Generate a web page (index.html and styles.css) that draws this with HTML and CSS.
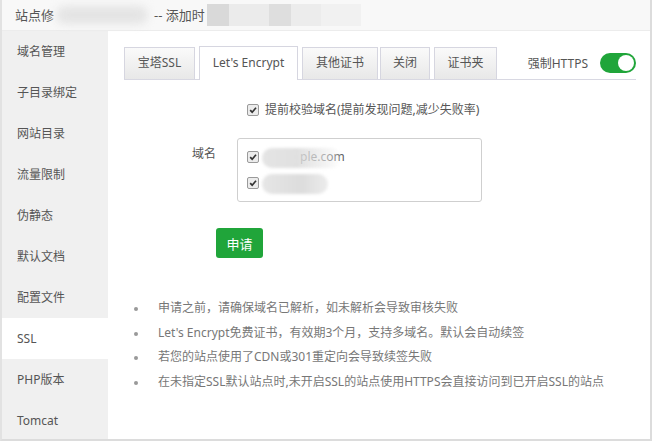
FILE: index.html
```html
<!DOCTYPE html>
<html lang="zh-CN">
<head>
<meta charset="utf-8">
<title>站点修改</title>
<link rel="stylesheet" href="styles.css">
</head>
<body>
<div class="window">
  <div class="header">
    <span class="title">站点修</span><span class="blur blur-a"></span><span class="title">-- 添加时</span><span class="mosaic"><i class="m1"></i><i class="m2"></i><i class="m3"></i><i class="m4"></i><i class="m5"></i></span>
  </div>
  <div class="main">
    <ul class="sidebar">
      <li>域名管理</li>
      <li>子目录绑定</li>
      <li>网站目录</li>
      <li>流量限制</li>
      <li>伪静态</li>
      <li>默认文档</li>
      <li>配置文件</li>
      <li class="active">SSL</li>
      <li>PHP版本</li>
      <li>Tomcat</li>
    </ul>
    <div class="content">
      <div class="tabbar">
        <div class="tab t1">宝塔SSL</div>
        <div class="tab t2 on">Let's Encrypt</div>
        <div class="tab t3">其他证书</div>
        <div class="tab t4">关闭</div>
        <div class="tab t5">证书夹</div>
        <div class="force">
          <span class="force-label">强制HTTPS</span>
          <span class="toggle"><span class="knob"></span></span>
        </div>
      </div>

      <div class="check-row">
        <span class="cb"><svg viewBox="0 0 12 12" width="12" height="12"><path d="M2.6 6.2 L5 8.6 L9.6 3.2" fill="none" stroke="#333" stroke-width="2"/></svg></span>
        <span class="check-text">提前校验域名(提前发现问题,减少失败率)</span>
      </div>

      <div class="form-row">
        <div class="label">域名</div>
        <div class="domains">
          <div class="drow">
            <span class="cb"><svg viewBox="0 0 12 12" width="12" height="12"><path d="M2.6 6.2 L5 8.6 L9.6 3.2" fill="none" stroke="#333" stroke-width="2"/></svg></span>
            <span class="dname"><span class="dtext">ple.com</span><span class="dblur b1"></span></span>
          </div>
          <div class="drow">
            <span class="cb"><svg viewBox="0 0 12 12" width="12" height="12"><path d="M2.6 6.2 L5 8.6 L9.6 3.2" fill="none" stroke="#333" stroke-width="2"/></svg></span>
            <span class="dname"><span class="dblur b2"></span></span>
          </div>
        </div>
      </div>

      <div class="btn-row"><button class="btn">申请</button></div>

      <ul class="tips">
        <li>申请之前，请确保域名已解析，如未解析会导致审核失败</li>
        <li>Let's Encrypt免费证书，有效期3个月，支持多域名。默认会自动续签</li>
        <li>若您的站点使用了CDN或301重定向会导致续签失败</li>
        <li>在未指定SSL默认站点时,未开启SSL的站点使用HTTPS会直接访问到已开启SSL的站点</li>
      </ul>
    </div>
  </div>
</div>
</body>
</html>
```

FILE: styles.css
```css
* { box-sizing: border-box; }
html, body { margin: 0; padding: 0; background: #fff; }
body {
  font-family: "Noto Sans", "Noto Sans CJK SC", sans-serif;
  color: #555;
  width: 652px;
  height: 441px;
  overflow: hidden;
}
.window {
  width: 652px;
  height: 441px;
  border-left: 2px solid #e2e2e2;
  border-right: 2px solid #dcdcdc;
  border-bottom: 2px solid #dcdcdc;
  display: flex;
  flex-direction: column;
  overflow: hidden;
}
.header {
  height: 31px;
  flex: none;
  background: #f8f8f8;
  border-bottom: 1px solid #ececec;
  padding-left: 13px;
  display: flex;
  align-items: center;
  font-size: 13px;
  line-height: 18px;
  color: #555;
}
.title { white-space: pre; }
.blur {
  display: inline-block;
  height: 18px;
  background: #e4e4e4;
  filter: blur(4px);
  border-radius: 9px;
}
.blur-a { width: 92px; margin: 0 6px 0 2px; }
.mosaic { display: inline-flex; height: 22px; margin-left: 2px; }
.mosaic i { display: block; height: 22px; }
.mosaic .m1 { width: 22px; background: #d9d9d9; }
.mosaic .m2 { width: 40px; background: #ebebeb; }
.mosaic .m3 { width: 22px; background: #dedede; }
.mosaic .m4 { width: 30px; background: #ececec; }
.mosaic .m5 { width: 40px; background: #f1f1f1; }

.main { flex: 1; display: flex; min-height: 0; }
.sidebar {
  list-style: none;
  margin: 0;
  padding: 0;
  width: 106px;
  flex: none;
  background: #f0f0f0;
}
.sidebar li {
  height: 41px;
  line-height: 41px;
  padding-left: 15px;
  font-size: 12px;
  color: #555;
}
.sidebar li.active { background: #fff; }

.content {
  flex: 1;
  padding: 15px 14px 0 16px;
  display: flex;
  flex-direction: column;
}
.tabbar {
  display: flex;
  align-items: flex-end;
  height: 34px;
  border-bottom: 1px solid #d8d8e2;
}
.tab {
  height: 32px;
  line-height: 30px;
  text-align: center;
  font-size: 12px;
  color: #555;
  border: 1px solid #d6d6e0;
  border-bottom: none;
  background: linear-gradient(#fafafa, #e8e8e8);
  margin-right: 4px;
  white-space: nowrap;
}
.t1 { width: 71px; }
.t2 { width: 99px; }
.t3 { width: 76px; margin-right: 2px; }
.t4 { width: 50px; }
.t5 { width: 63px; }
.tab.on {
  background: #fff;
  height: 34px;
  line-height: 32px;
  margin-bottom: -1px;
}
.force {
  margin-left: auto;
  align-self: center;
  display: flex;
  align-items: center;
}
.force-label { font-size: 12px; color: #555; margin-right: 12px; }
.toggle {
  width: 36px;
  height: 20px;
  border-radius: 10px;
  background: #20a53a;
  position: relative;
  display: inline-block;
}
.knob {
  position: absolute;
  right: 2px;
  top: 2px;
  width: 16px;
  height: 16px;
  border-radius: 50%;
  background: #fff;
}

.cb {
  width: 12px;
  height: 12px;
  border: 1px solid #9a9a9a;
  border-radius: 2px;
  background: #ececec;
  display: inline-flex;
  align-items: center;
  justify-content: center;
  flex: none;
}
.cb svg { display: block; width: 10px; height: 10px; }

.check-row {
  margin-top: 21px;
  padding-left: 123px;
  display: flex;
  align-items: center;
  height: 18px;
}
.check-text { font-size: 12px; color: #555; margin-left: 6px; line-height: 18px; }

.form-row {
  margin-top: 19px;
  display: flex;
  align-items: flex-start;
  padding-left: 67px;
}
.label {
  width: 25px;
  margin-top: 7px;
  font-size: 12px;
  line-height: 18px;
  color: #555;
  text-align: right;
  white-space: nowrap;
}
.domains {
  margin-left: 21px;
  width: 245px;
  height: 64px;
  border: 1px solid #cfcfcf;
  border-radius: 3px;
  padding: 9px 9px;
  display: flex;
  flex-direction: column;
  gap: 8px;
}
.drow { display: flex; align-items: center; height: 18px; }
.dname { position: relative; margin-left: 3px; height: 18px; display: inline-block; width: 120px; }
.dtext { position: absolute; left: 38px; top: 0; font-size: 12px; line-height: 18px; color: #555; }
.dblur {
  position: absolute;
  top: 0;
  height: 20px;
  border-radius: 10px;
  filter: blur(1.5px);
}
.b1 { left: 0; width: 80px; background: linear-gradient(90deg, #e4e4e4, #e0e0e0 45%, rgba(220,220,220,0.85) 46%, rgba(235,235,235,0.6) 80%, rgba(255,255,255,0.2)); }
.b2 { left: 0; width: 66px; background: linear-gradient(90deg, #e6e6e6, #dcdcdc 60%, #ececec); }

.btn-row { margin-top: 26px; padding-left: 92px; }
.btn {
  width: 47px;
  height: 30px;
  border: none;
  border-radius: 3px;
  background: #20a53a;
  color: #fff;
  font-family: "Noto Sans", "Noto Sans CJK SC", sans-serif;
  font-size: 13px;
  padding: 0;
}

.tips {
  list-style: none;
  margin: 38px 0 0 0;
  padding: 0 0 0 10px;
}
.tips li {
  position: relative;
  padding-left: 24px;
  font-size: 12px;
  line-height: 24.6px;
  color: #777;
  white-space: nowrap;
}
.tips li::before {
  content: "";
  position: absolute;
  left: 0;
  top: 11px;
  width: 4px;
  height: 4px;
  border-radius: 50%;
  background: #999;
}
```
